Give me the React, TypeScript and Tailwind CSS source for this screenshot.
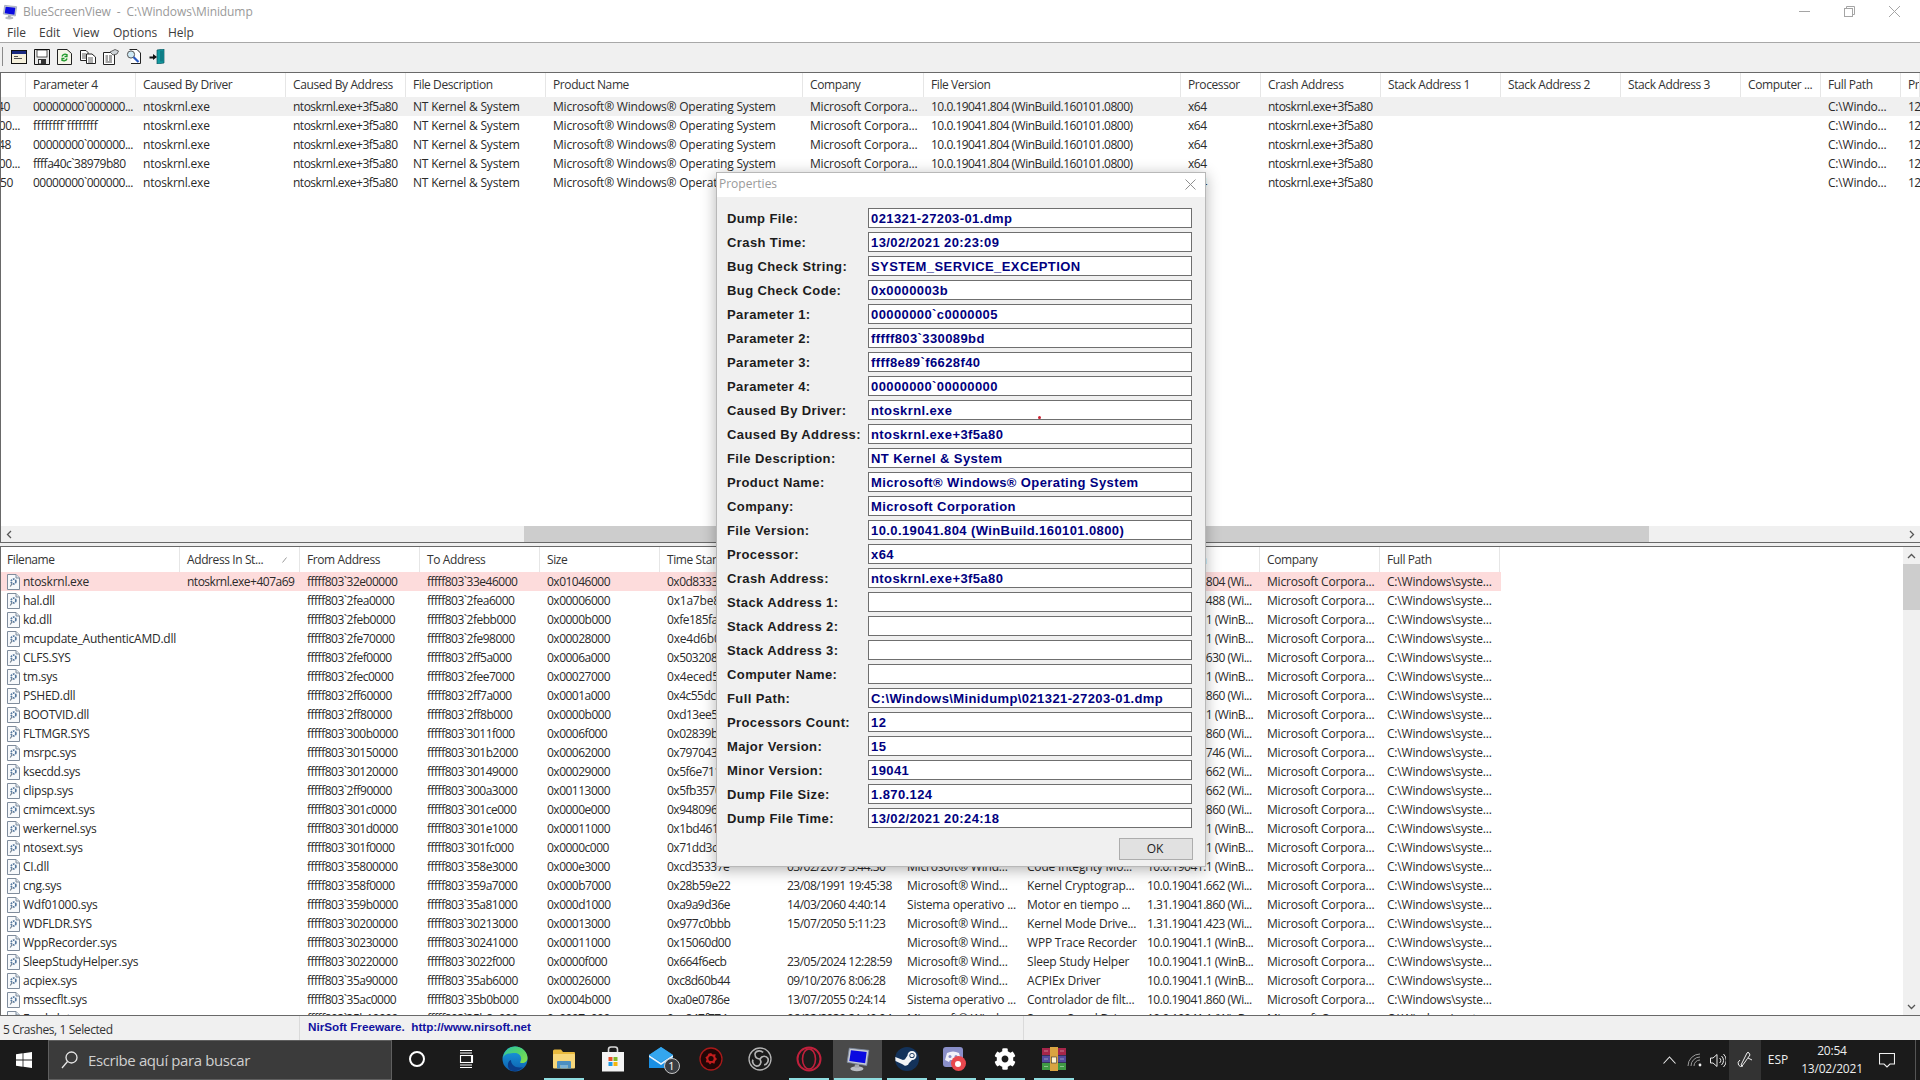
import React from 'react';
import { FaCog } from 'react-icons/fa';

const UI = "font-['Open_Sans','Noto_Sans',sans-serif]";
const trk = (s: string) => (/\d{2}/.test(s) ? 'tracking-[-0.5px]' : 'tracking-[-0.2px]');

const topW = ['w-[110px]','w-[150px]','w-[120px]','w-[140px]','w-[257px]','w-[121px]','w-[257px]','w-[80px]','w-[120px]','w-[120px]','w-[120px]','w-[120px]','w-[80px]','w-[80px]','w-[19px]'];
const topHead = ['Parameter 4','Caused By Driver','Caused By Address','File Description','Product Name','Company','File Version','Processor','Crash Address','Stack Address 1','Stack Address 2','Stack Address 3','Computer ...','Full Path','Pr'];
const topRows = [
  { clip: 'ffff8e89`f6628f40', pad: 'pr-[16px]', p4: '00000000`000000...' },
  { clip: 'ffffb60c`00...', pad: 'pr-[6px]', p4: 'ffffffff`ffffffff' },
  { clip: 'ffffa40c`3b6e2f48', pad: 'pr-[15px]', p4: '00000000`000000...' },
  { clip: 'ffffa40c`00...', pad: 'pr-[6px]', p4: 'ffffa40c`38979b80' },
  { clip: 'ffff9d07`1a2c4450', pad: 'pr-[13px]', p4: '00000000`000000...' },
];

const botW = 'w-[120px]';
const botHead = ['Address In St...','From Address','To Address','Size','Time Stamp','Time String','Product Name','File Description','File Version','Company','Full Path'];
const v = (s: string) => `10.0.19041.${s}`;
const botRows: string[][] = [
  ['ntoskrnl.exe','ntoskrnl.exe+407a69','32e00000','33e46000','0x01046000','0x0d83333e','','','',v('804 (Wi...')],
  ['hal.dll','','2fea0000','2fea6000','0x00006000','0x1a7be8f2','','','',v('488 (Wi...')],
  ['kd.dll','','2feb0000','2febb000','0x0000b000','0xfe185fa0','','','',v('1 (WinB...')],
  ['mcupdate_AuthenticAMD.dll','','2fe70000','2fe98000','0x00028000','0xe4d6b0c1','','','',v('1 (WinB...')],
  ['CLFS.SYS','','2fef0000','2ff5a000','0x0006a000','0x5032081d','','','',v('630 (Wi...')],
  ['tm.sys','','2fec0000','2fee7000','0x00027000','0x4eced5a1','','','',v('1 (WinB...')],
  ['PSHED.dll','','2ff60000','2ff7a000','0x0001a000','0x4c55dc3b','','','',v('860 (Wi...')],
  ['BOOTVID.dll','','2ff80000','2ff8b000','0x0000b000','0xd13ee5f0','','','',v('1 (WinB...')],
  ['FLTMGR.SYS','','300b0000','3011f000','0x0006f000','0x02839b7a','','','',v('860 (Wi...')],
  ['msrpc.sys','','30150000','301b2000','0x00062000','0x7970437c','','','',v('746 (Wi...')],
  ['ksecdd.sys','','30120000','30149000','0x00029000','0x5f6e7112','','','',v('662 (Wi...')],
  ['clipsp.sys','','2ff90000','300a3000','0x00113000','0x5fb35709','','','',v('662 (Wi...')],
  ['cmimcext.sys','','301c0000','301ce000','0x0000e000','0x948096e3','','','',v('860 (Wi...')],
  ['werkernel.sys','','301d0000','301e1000','0x00011000','0x1bd46127','','','',v('1 (WinB...')],
  ['ntosext.sys','','301f0000','301fc000','0x0000c000','0x71dd3c88','','','',v('1 (WinB...')],
  ['CI.dll','','35800000','358e3000','0x000e3000','0xcd35337e','03/02/2079 3:44:30','Microsoft® Wind...','Code Integrity Mo...',v('1 (WinB...')],
  ['cng.sys','','358f0000','359a7000','0x000b7000','0x28b59e22','23/08/1991 19:45:38','Microsoft® Wind...','Kernel Cryptograp...',v('662 (Wi...')],
  ['Wdf01000.sys','','359b0000','35a81000','0x000d1000','0xa9a9d36e','14/03/2060 4:40:14','Sistema operativo ...','Motor en tiempo ...','1.31.19041.860 (Wi...'],
  ['WDFLDR.SYS','','30200000','30213000','0x00013000','0x977c0bbb','15/07/2050 5:11:23','Microsoft® Wind...','Kernel Mode Drive...','1.31.19041.423 (Wi...'],
  ['WppRecorder.sys','','30230000','30241000','0x00011000','0x15060d00','','Microsoft® Wind...','WPP Trace Recorder',v('1 (WinB...')],
  ['SleepStudyHelper.sys','','30220000','3022f000','0x0000f000','0x664f6ecb','23/05/2024 12:28:59','Microsoft® Wind...','Sleep Study Helper',v('1 (WinB...')],
  ['acpiex.sys','','35a90000','35ab6000','0x00026000','0xc8d60b44','09/10/2076 8:06:28','Microsoft® Wind...','ACPIEx Driver',v('1 (WinB...')],
  ['mssecflt.sys','','35ac0000','35b0b000','0x0004b000','0xa0e0786e','13/07/2055 0:24:14','Sistema operativo ...','Controlador de filt...',v('860 (Wi...')],
  ['Fwpkclnt.sys','','35b10000','35b8a000','0x0007a000','0xe847f774','06/02/2030 21:49:04','Microsoft® Wind...','Sensor Spool Dri...',v('1 (WinB...')],
];

const fields: [string, string][] = [
  ['Dump File:','021321-27203-01.dmp'],['Crash Time:','13/02/2021 20:23:09'],['Bug Check String:','SYSTEM_SERVICE_EXCEPTION'],['Bug Check Code:','0x0000003b'],
  ['Parameter 1:','00000000`c0000005'],['Parameter 2:','fffff803`330089bd'],['Parameter 3:','ffff8e89`f6628f40'],['Parameter 4:','00000000`00000000'],
  ['Caused By Driver:','ntoskrnl.exe'],['Caused By Address:','ntoskrnl.exe+3f5a80'],['File Description:','NT Kernel & System'],['Product Name:','Microsoft® Windows® Operating System'],
  ['Company:','Microsoft Corporation'],['File Version:','10.0.19041.804 (WinBuild.160101.0800)'],['Processor:','x64'],['Crash Address:','ntoskrnl.exe+3f5a80'],
  ['Stack Address 1:',''],['Stack Address 2:',''],['Stack Address 3:',''],['Computer Name:',''],
  ['Full Path:','C:\\Windows\\Minidump\\021321-27203-01.dmp'],['Processors Count:','12'],['Major Version:','15'],['Minor Version:','19041'],['Dump File Size:','1.870.124'],['Dump File Time:','13/02/2021 20:24:18'],
];

const Monitor = ({ s = 16 }: { s?: number }) => (
  <svg width={s} height={s} viewBox="0 0 24 24">
    <path d="M4 2 L22 4 L20 18 L2 15 Z" fill="#c8ccd4" stroke="#7d8aa0" strokeWidth="0.8" />
    <path d="M5.5 4 L20 5.6 L18.6 16 L4 13.8 Z" fill="#0a0ae0" />
    <ellipse cx="11" cy="21" rx="6" ry="2.2" fill="#b9bcc2" />
    <rect x="9" y="17" width="4" height="3" fill="#a5a8ae" />
  </svg>
);

const FileIcon = () => (
  <svg width="13" height="16" viewBox="0 0 13 16" className="shrink-0">
    <path d="M0.5 0.5 H9 L12.5 4 V15.5 H0.5 Z" fill="#f7f9fb" stroke="#7f8c9c" />
    <path d="M9 0.5 V4 H12.5" fill="#dfe6ee" stroke="#7f8c9c" />
    <circle cx="6.5" cy="7.5" r="2.4" fill="none" stroke="#55789e" strokeWidth="1.7" strokeDasharray="1.6 0.8" />
    <path d="M3.2 12.5 L5.2 9.5" stroke="#6d7c8c" strokeWidth="1.2" />
  </svg>
);

const toolbar = [
  <svg key="1" width="16" height="14" viewBox="0 0 16 14"><rect x="0.5" y="0.5" width="15" height="13" fill="#f5f0dc" stroke="#111" /><rect x="1" y="1" width="14" height="3" fill="#1a2a80" /><path d="M3 6.5 H7 M3 8.5 H11" stroke="#555" /></svg>,
  <svg key="2" width="16" height="16" viewBox="0 0 16 16"><path d="M0.5 0.5 H15.5 V15.5 H0.5 Z" fill="#e8e8e8" stroke="#111" /><rect x="3" y="1" width="10" height="7" fill="#fff" stroke="#111" strokeWidth="0.7" /><rect x="4" y="10" width="8" height="5.5" fill="#333" /><rect x="5" y="11" width="2" height="3.5" fill="#eee" /></svg>,
  <svg key="3" width="15" height="16" viewBox="0 0 15 16"><path d="M0.5 0.5 H10 L14.5 4.5 V15.5 H0.5 Z" fill="#f6f6ea" stroke="#222" /><path d="M5 7.5 A3 3 0 0 1 10 6 M10 5 V7.5 H7.5" fill="none" stroke="#1f9a2a" strokeWidth="1.3" /><path d="M10 9.5 A3 3 0 0 1 5 11 M5 12 V9.5 H7.5" fill="none" stroke="#1f9a2a" strokeWidth="1.3" /></svg>,
  <svg key="4" width="16" height="14" viewBox="0 0 16 14"><path d="M0.5 0.5 H6 L8 2.5 V10.5 H0.5 Z" fill="#fff" stroke="#222" /><path d="M6.5 4 H12 L15.5 7 V13.5 H6.5 Z" fill="#fff" stroke="#222" /><path d="M2 4 H6 M2 6 H6 M2 8 H6 M8 8 H13 M8 10 H13 M8 12 H13" stroke="#333" strokeWidth="0.8" /></svg>,
  <svg key="5" width="16" height="16" viewBox="0 0 16 16"><path d="M0.5 3.5 H9 L11.5 6 V15.5 H0.5 Z" fill="#fff" stroke="#222" /><path d="M2.5 7 H5 M6 7 H9 M2.5 9 H5 M6 9 H9 M2.5 11 H5 M6 11 H9 M2.5 13 H9" stroke="#333" strokeWidth="0.9" /><path d="M7 3 L12 0.5 L15.5 2 L14 5 L10 6 Z" fill="#cfd4d8" stroke="#444" strokeWidth="0.8" /></svg>,
  <svg key="6" width="16" height="16" viewBox="0 0 16 16"><path d="M3.5 0.5 H11 L14.5 4 V14.5 H5" fill="#fff" stroke="#222" /><circle cx="5" cy="5.5" r="3.6" fill="#cfeaf6" stroke="#555" /><path d="M7.5 8 L12.5 13" stroke="#2a5bc2" strokeWidth="2.2" /></svg>,
  <svg key="7" width="16" height="15" viewBox="0 0 16 15"><path d="M8 1 L15 0 V14 L8 15 Z" fill="#119aa0" stroke="#0b5560" strokeWidth="0.7" /><rect x="11" y="1.5" width="3" height="11" fill="#0f7d86" /><path d="M0.5 7.5 H4 V5 L8 8 L4 11 V9.5 H0.5 Z" fill="#111" /></svg>,
];

const Win = () => <svg width="16" height="16" viewBox="0 0 16 16" fill="#fff"><path d="M0 2.3 L6.6 1.3 V7.6 H0 Z M7.4 1.2 L16 0 V7.6 H7.4 Z M0 8.4 H6.6 V14.7 L0 13.7 Z M7.4 8.4 H16 V16 L7.4 14.8 Z" /></svg>;

const Edge = () => (
  <svg width="26" height="26" viewBox="0 0 26 26">
    <defs>
      <linearGradient id="eg" x1="0" y1="0" x2="1" y2="1"><stop offset="0" stopColor="#2bc4a8" /><stop offset="0.5" stopColor="#53d26c" /><stop offset="1" stopColor="#8be04a" /></linearGradient>
      <linearGradient id="eb" x1="0" y1="0" x2="0" y2="1"><stop offset="0" stopColor="#1aa0e0" /><stop offset="1" stopColor="#0d5fb0" /></linearGradient>
    </defs>
    <circle cx="13" cy="13" r="12.5" fill="url(#eb)" />
    <path d="M1 12 C2 4 8 0.5 13 0.5 C20 0.5 25.5 6 25.5 12 C25.5 16.5 21 18 18 16.5 C21 12 18 7 13 7 C7 7 2 8 1 12 Z" fill="url(#eg)" />
    <path d="M9 14 C9 19 14 23 21 21 C18 25 12 26 8 24 C5 22 5 15 9 14 Z" fill="#0a3d8a" />
  </svg>
);

const Folder = () => (
  <svg width="24" height="20" viewBox="0 0 24 20">
    <path d="M1 2 Q1 0.5 2.5 0.5 H9 L11 3 H22 Q23 3 23 4 V6 H1 Z" fill="#e8b93e" />
    <rect x="1" y="5" width="22" height="14.5" rx="1" fill="#f7d77a" />
    <path d="M5 19.5 V13 Q5 12 6 12 H18 Q19 12 19 13 V19.5 H15.5 V16 H8.5 V19.5 Z" fill="#4d8fc0" />
    <rect x="8.5" y="16" width="7" height="3.5" fill="#7ab2d6" />
  </svg>
);

const Store = () => (
  <svg width="24" height="26" viewBox="0 0 24 26">
    <path d="M7.5 7 V3.5 Q7.5 1 10 1 H14 Q16.5 1 16.5 3.5 V7" fill="none" stroke="#d8d8d8" strokeWidth="1.6" />
    <rect x="1" y="6" width="22" height="19.5" fill="#f4f4f4" />
    <rect x="7.5" y="11" width="4" height="4" fill="#e8502a" /><rect x="12.5" y="11" width="4" height="4" fill="#7fba2a" />
    <rect x="7.5" y="16" width="4" height="4" fill="#1e9be8" /><rect x="12.5" y="16" width="4" height="4" fill="#f5b60d" />
  </svg>
);

const Mail = () => (
  <span className="relative block w-[26px] h-[24px]">
    <svg width="24" height="22" viewBox="0 0 24 22" className="block">
      <path d="M0 8 L12 0 L24 8 V21 H0 Z" fill="#1a8fe3" />
      <path d="M0 8 L12 16 L24 8 V10 L12 18 L0 10 Z" fill="#e7f3fc" />
      <path d="M0 8 L12 0 L24 8 L12 15 Z" fill="#34a6ee" />
    </svg>
    <span className={`absolute left-[15px] top-[11px] w-[16px] h-[16px] rounded-full bg-[#3a3d42] border border-[#c7c7c7] text-white text-[11px] leading-[14px] text-center ${UI}`}>1</span>
  </span>
);

const Booster = () => (
  <svg width="24" height="24" viewBox="0 0 24 24">
    <circle cx="12" cy="12" r="11" fill="#220606" stroke="#a81a1a" strokeWidth="1.3" />
    <path d="M12 6 L13.6 7.6 L16.6 7.2 L16.2 10 L18 12 L16.2 14 L15.4 16.8 L12.8 15.8 L11 17.4 L9.4 15.6 L6.8 15.2 L7.6 12.6 L6.4 10.2 L8.4 9 L9.4 6.8 Z" fill="#c41d1d" />
    <circle cx="12" cy="11.5" r="2.6" fill="#220606" />
  </svg>
);

const Obs = () => (
  <svg width="24" height="24" viewBox="0 0 24 24" fill="none" stroke="#b4b4b4">
    <circle cx="12" cy="12" r="11" strokeWidth="1.3" />
    <path d="M12 12 C7.5 12 6 8 7.5 5.5 C9 3.5 13 3 15 5.5" strokeWidth="1.7" />
    <path d="M12 12 C7.5 12 6 8 7.5 5.5 C9 3.5 13 3 15 5.5" strokeWidth="1.7" transform="rotate(120 12 12)" />
    <path d="M12 12 C7.5 12 6 8 7.5 5.5 C9 3.5 13 3 15 5.5" strokeWidth="1.7" transform="rotate(240 12 12)" />
  </svg>
);

const Opera = () => (
  <svg width="26" height="26" viewBox="0 0 26 26" fill="none" stroke="#c0203c">
    <circle cx="13" cy="13" r="11.5" strokeWidth="2" />
    <ellipse cx="13" cy="13" rx="6.5" ry="10" strokeWidth="1.6" />
  </svg>
);

const Steam = () => (
  <svg width="24" height="24" viewBox="0 0 24 24">
    <circle cx="12" cy="12" r="12" fill="#13325a" />
    <path d="M0.5 14 L8 17.5 A3.5 3.5 0 0 0 14 16 L17 13 A4.5 4.5 0 1 0 12.5 8.5 L9.8 12.6 A3.5 3.5 0 0 0 8 13 L0.3 10 Z" fill="#f2f4f6" />
    <circle cx="17" cy="8.5" r="2.6" fill="#13325a" />
    <circle cx="17" cy="8.5" r="1.8" fill="#f2f4f6" />
  </svg>
);

const Discord = () => (
  <span className="relative block w-[26px] h-[24px]">
    <svg width="20" height="20" viewBox="0 0 20 20" className="block">
      <rect width="20" height="20" rx="3" fill="#8a8fc9" />
      <path d="M4 6 Q10 3 16 6 L18 13 L14 15 L13 13 H7 L6 15 L2 13 Z" fill="#f1f1fa" />
      <circle cx="7" cy="9.5" r="1.5" fill="#8a8fc9" />
      <circle cx="13" cy="9.5" r="1.5" fill="#8a8fc9" />
    </svg>
    <span className="absolute left-[8px] top-[9px] w-[15px] h-[15px] rounded-full bg-[#e8484e] flex items-center justify-center"><span className="w-[6px] h-[6px] rounded-full bg-white" /></span>
  </span>
);

const Rar = () => (
  <svg width="24" height="24" viewBox="0 0 24 24">
    <rect x="0" y="1" width="24" height="7" fill="#a6264a" />
    <rect x="0" y="8.5" width="24" height="7" fill="#524a9e" />
    <rect x="0" y="16" width="24" height="7" fill="#3f9a44" />
    <rect x="8" y="0" width="8" height="24" fill="#d9a441" />
    <rect x="9.5" y="10" width="5" height="6" fill="#fff3d0" stroke="#333" strokeWidth="0.6" />
    <path d="M2 4 H6 M18 4 H22 M2 12 H6 M18 12 H22 M2 19.5 H6 M18 19.5 H22" stroke="#ffffff66" />
  </svg>
);

const Slot = ({ children, bar, active }: { children: React.ReactNode; bar?: boolean; active?: boolean }) => (
  <div className={`w-[49px] h-[40px] flex flex-col items-center ${active ? 'bg-[#4a4a4a]' : ''}`}>
    <div className="flex-1 flex items-center justify-center">{children}</div>
    <div className={`h-[2px] ${active ? 'w-[48px] bg-[#8fdde0]' : bar ? 'w-[40px] bg-[#8fdde0]' : ''}`} />
  </div>
);

export default function App() {
  return (
    <div className={`relative w-[1920px] h-[1080px] overflow-hidden bg-white flex flex-col text-[12px] text-[#2a2a2a] ${UI}`}>
      {/* title bar */}
      <div className="h-[23px] flex items-center shrink-0">
        <span className="ml-[2px] mr-[5px] flex"><Monitor s={16} /></span>
        <span className="text-[#9a9a9a] text-[12px] tracking-[-0.1px]">BlueScreenView&nbsp; -&nbsp; C:\Windows\Minidump</span>
        <div className="ml-auto flex items-center text-[#9c9c9c]">
          <div className="w-[45px] flex justify-center"><svg width="11" height="11" viewBox="0 0 11 11"><path d="M0 5.5 H11" stroke="#a5a5a5" /></svg></div>
          <div className="w-[45px] flex justify-center"><svg width="11" height="11" viewBox="0 0 11 11" fill="none" stroke="#a5a5a5"><path d="M2.5 2.5 V0.5 H10.5 V8.5 H8.5" /><rect x="0.5" y="2.5" width="8" height="8" /></svg></div>
          <div className="w-[45px] mr-[3px] flex justify-center"><svg width="11" height="11" viewBox="0 0 11 11" stroke="#a5a5a5"><path d="M0 0 L11 11 M11 0 L0 11" /></svg></div>
        </div>
      </div>
      {/* menu */}
      <div className="h-[20px] flex items-center border-b border-[#a8a8a8] shrink-0 text-[#3c3c3c]">
        <span className="ml-[7px] w-[32px]">File</span>
        <span className="w-[34px]">Edit</span>
        <span className="w-[40px]">View</span>
        <span className="w-[55px]">Options</span>
        <span>Help</span>
      </div>
      {/* toolbar */}
      <div className="h-[29px] bg-[#f0f0f0] flex items-center shrink-0 pb-[2px]">
        <div className="ml-[2px] mr-[4px] w-[1px] h-[19px] bg-[#8a8a8a]" />
        {toolbar.map((t, i) => <div key={i} className="w-[23px] flex justify-center">{t}</div>)}
      </div>
      {/* upper list */}
      <div className="h-[471px] shrink-0 border-y border-[#696969] border-l flex flex-col">
        <div className="flex-1 overflow-hidden">
          <div className="flex h-[24px] items-center tracking-[-0.4px]">
            <div className="w-[25px] h-full border-r border-[#e6e6e6] shrink-0" />
            {topHead.map((h, i) => <div key={h} className={`${topW[i]} shrink-0 h-full leading-[24px] pl-[7px] border-r border-[#e6e6e6] whitespace-nowrap overflow-hidden text-[#333]`}>{h}</div>)}
          </div>
          {topRows.map((r, i) => (
            <div key={i} className={`flex h-[19px] leading-[19px] ${i === 0 ? 'bg-[#f0f0f0]' : ''}`}>
              <div className={`w-[25px] shrink-0 overflow-hidden flex justify-end tracking-[-0.4px] ${r.pad}`}><span className="shrink-0 whitespace-nowrap">{r.clip}</span></div>
              {[r.p4,'ntoskrnl.exe','ntoskrnl.exe+3f5a80','NT Kernel & System','Microsoft® Windows® Operating System','Microsoft Corpora...','10.0.19041.804 (WinBuild.160101.0800)','x64','ntoskrnl.exe+3f5a80','','','','','C:\\Windo...','12'].map((c, j) => (
                <div key={j} className={`${topW[j]} ${trk(c)} shrink-0 pl-[7px] whitespace-nowrap overflow-hidden`}>{c}</div>
              ))}
            </div>
          ))}
        </div>
        <div className="h-[16px] bg-[#f0f0f0] flex items-center shrink-0">
          <div className="w-[16px] flex justify-center"><svg width="6" height="9" viewBox="0 0 6 9" fill="none" stroke="#555" strokeWidth="1.3"><path d="M5 1 L1.5 4.5 L5 8" /></svg></div>
          <div className="ml-[507px] w-[1125px] h-full bg-[#cdcdcd]" />
          <div className="ml-auto w-[16px] flex justify-center"><svg width="6" height="9" viewBox="0 0 6 9" fill="none" stroke="#555" strokeWidth="1.3"><path d="M1 1 L4.5 4.5 L1 8" /></svg></div>
        </div>
      </div>
      {/* splitter */}
      <div className="h-[3px] bg-[#f0f0f0] shrink-0" />
      {/* lower list */}
      <div className="h-[470px] shrink-0 border-y border-[#696969] border-l flex">
        <div className="flex-1 overflow-hidden">
          <div className="flex h-[25px] leading-[25px] tracking-[-0.4px]">
            <div className="w-[179px] shrink-0 pl-[6px] border-r border-[#e6e6e6] text-[#333]">Filename</div>
            {botHead.map((h, i) => (
              <div key={h} className={`${botW} shrink-0 pl-[7px] border-r border-[#e6e6e6] whitespace-nowrap overflow-hidden text-[#333] flex items-center`}>
                <span>{h}</span>
                {i === 0 && <svg width="5" height="6" viewBox="0 0 5 6" className="ml-auto mr-[12px]"><path d="M0.5 5.5 L4.5 0.5" stroke="#9a9a9a" /></svg>}
              </div>
            ))}
          </div>
          {botRows.map((r, i) => (
            <div key={i} className={`flex h-[19px] leading-[19px] w-[1500px] ${i === 0 ? 'bg-[#fddcdc]' : ''}`}>
              <div className="w-[179px] shrink-0 pl-[6px] flex items-center gap-[3px] whitespace-nowrap overflow-hidden tracking-[-0.25px]"><FileIcon /><span>{r[0]}</span></div>
              <div className={`${botW} shrink-0 pl-[7px] whitespace-nowrap overflow-hidden tracking-[-0.5px]`}>{r[1]}</div>
              <div className={`${botW} shrink-0 pl-[7px] whitespace-nowrap overflow-hidden tracking-[-0.5px]`}>{`fffff803\`${r[2]}`}</div>
              <div className={`${botW} shrink-0 pl-[7px] whitespace-nowrap overflow-hidden tracking-[-0.5px]`}>{`fffff803\`${r[3]}`}</div>
              {r.slice(4).map((c, j) => <div key={j} className={`${botW} ${trk(c)} shrink-0 pl-[7px] whitespace-nowrap overflow-hidden`}>{c}</div>)}
              <div className={`${botW} shrink-0 pl-[7px] whitespace-nowrap overflow-hidden tracking-[-0.2px]`}>Microsoft Corpora...</div>
              <div className={`${botW} shrink-0 pl-[7px] whitespace-nowrap overflow-hidden tracking-[-0.2px]`}>C:\Windows\syste...</div>
            </div>
          ))}
        </div>
        <div className="w-[17px] bg-[#f0f0f0] flex flex-col items-center shrink-0">
          <div className="h-[17px] flex items-center"><svg width="9" height="6" viewBox="0 0 9 6" fill="none" stroke="#555" strokeWidth="1.3"><path d="M1 5 L4.5 1.5 L8 5" /></svg></div>
          <div className="w-full h-[46px] bg-[#cdcdcd]" />
          <div className="mt-auto h-[17px] flex items-center"><svg width="9" height="6" viewBox="0 0 9 6" fill="none" stroke="#555" strokeWidth="1.3"><path d="M1 1 L4.5 4.5 L8 1" /></svg></div>
        </div>
      </div>
      {/* status bar */}
      <div className="h-[24px] bg-[#f0f0f0] flex shrink-0 text-[#333] leading-[24px]">
        <div className="w-[300px] pl-[3px] border-r border-[#dadada] pt-[2px] tracking-[-0.4px]">5 Crashes, 1 Selected</div>
        <div className="w-[724px] pl-[8px] border-r border-[#dadada] font-['Liberation_Sans',sans-serif] font-bold text-[11.7px] leading-[22px] text-[#1212a0]">NirSoft Freeware.&nbsp; http://www.nirsoft.net</div>
      </div>
      {/* taskbar */}
      <div className="h-[40px] bg-[#1b1b1b] flex items-center shrink-0">
        <div className="w-[48px] flex justify-center"><Win /></div>
        <div className="w-[344px] h-[40px] bg-[#3b3b3b] border border-[#5f5f5f] flex items-center pl-[12px] text-[15px] text-[#cfcfcf] tracking-[-0.4px]">
          <svg width="17" height="18" viewBox="0 0 17 18" fill="none" stroke="#e6e6e6" strokeWidth="1.3"><circle cx="10.5" cy="6.5" r="5.5" /><path d="M6.5 10.5 L1 17" /></svg>
          <span className="pl-[10px] whitespace-nowrap">Escribe aquí para buscar</span>
        </div>
        <Slot><span className="block w-[16px] h-[16px] rounded-full border-[2.5px] border-white" /></Slot>
        <Slot><svg width="16" height="18" viewBox="0 0 16 18" fill="none" stroke="#fff" strokeWidth="1.1"><path d="M2 0.5 H14 M2 3 H14" /><rect x="2.5" y="5.5" width="11" height="7" /><path d="M2 15 H14 M2 17.5 H14" /><path d="M14.5 5 V13" /></svg></Slot>
        <Slot><Edge /></Slot>
        <Slot bar><Folder /></Slot>
        <Slot><Store /></Slot>
        <Slot><Mail /></Slot>
        <Slot><Booster /></Slot>
        <Slot><Obs /></Slot>
        <Slot bar><Opera /></Slot>
        <Slot active bar><Monitor s={26} /></Slot>
        <Slot bar><Steam /></Slot>
        <Slot bar><Discord /></Slot>
        <Slot bar><FaCog size={22} color="#fff" /></Slot>
        <Slot bar><Rar /></Slot>
        <div className="ml-auto flex items-center h-full text-[#e8e8e8]">
          <div className="w-[26px] flex justify-center pr-[4px]"><svg width="13" height="8" viewBox="0 0 13 8" fill="none" stroke="#e8e8e8" strokeWidth="1.1"><path d="M0.5 7.5 L6.5 1 L12.5 7.5" /></svg></div>
          <div className="w-[22px] flex justify-center"><svg width="16" height="14" viewBox="0 0 16 14" fill="none" stroke="#9b9b9b" strokeWidth="1"><path d="M1 13 A12 12 0 0 1 13 1 M4 13 A9 9 0 0 1 13 4 M7 13 A6 6 0 0 1 13 7" /><circle cx="13" cy="12" r="1.4" fill="#f0f0f0" stroke="none" /></svg></div>
          <div className="w-[23px] flex justify-center"><svg width="16" height="15" viewBox="0 0 16 15" fill="none" stroke="#e8e8e8" strokeWidth="1"><path d="M0.5 5 H3 L7 1.5 V13.5 L3 10 H0.5 Z" /><path d="M9.5 5 A3 3 0 0 1 9.5 10 M11.5 3 A6 6 0 0 1 11.5 12 M13.5 1 A9 9 0 0 1 13.5 14" /></svg></div>
          <div className="w-[32px] h-full bg-[#333333] flex items-center justify-center"><svg width="16" height="18" viewBox="0 0 16 18" fill="none" stroke="#f0f0f0" strokeWidth="1"><path d="M4 14 L10 2 Q11 0.5 12 2 L13 4 Q10 8 8 11 L5 15 Z" /><path d="M3 9 Q0 11 1.5 14 Q3 16.5 6 15" /><path d="M11 7 L15 9" /></svg></div>
          <div className="w-[34px] text-center text-[12px] text-[#eee]">ESP</div>
          <div className="w-[74px] text-center text-[12px] leading-[18px] text-[#eee] tracking-[-0.2px]"><div>20:54</div><div>13/02/2021</div></div>
          <div className="w-[36px] flex justify-center"><svg width="16" height="15" viewBox="0 0 16 15" fill="none" stroke="#f0f0f0" strokeWidth="1.1"><path d="M0.5 0.5 H15.5 V11 H11 L8 14 L5 11 H0.5 Z" /></svg></div>
          <div className="w-[15px] h-full flex justify-end pr-[4px]"><div className="w-[1px] h-full bg-[#555]" /></div>
        </div>
      </div>

      {/* properties dialog */}
      <div className="absolute left-[716px] top-[172px] w-[490px] h-[695px] bg-[#f0f0f0] border border-[#b8b8b8] shadow-[0_3px_14px_rgba(0,0,0,0.3)] flex flex-col">
        <div className="h-[24px] bg-white flex items-center justify-between pl-[2px] pr-[9px] pb-[2px] shrink-0 text-[#9a9a9a]">
          <span>Properties</span>
          <svg width="11" height="11" viewBox="0 0 11 11" stroke="#8f8f8f"><path d="M0.5 0.5 L10.5 10.5 M10.5 0.5 L0.5 10.5" /></svg>
        </div>
        <div className="pt-[11px] pl-[10px] pr-[12px] flex flex-col gap-[4px] font-['Liberation_Sans',sans-serif] font-bold text-[13px] tracking-[0.4px]">
          {fields.map(([l, val]) => (
            <div key={l} className="flex items-center h-[20px]">
              <div className="w-[141px] text-[#1c1c1c] whitespace-nowrap shrink-0 pt-[1px]">{l}</div>
              <div className="w-[324px] h-[20px] bg-white border border-[#6f6f6f] pl-[2px] leading-[19px] text-[#000080] whitespace-nowrap overflow-hidden">{val}</div>
            </div>
          ))}
        </div>
        <div className="pr-[12px] mt-[10px] flex justify-end">
          <div className="w-[74px] h-[22px] bg-[#e1e1e1] border border-[#adadad] text-center leading-[20px] text-[#222] pr-[2px]">OK</div>
        </div>
      </div>
      {/* cursor speck */}
      <div className="absolute left-[1038px] top-[416px] w-[3px] h-[3px] rounded-full bg-[#cc2233]" />
    </div>
  );
}
